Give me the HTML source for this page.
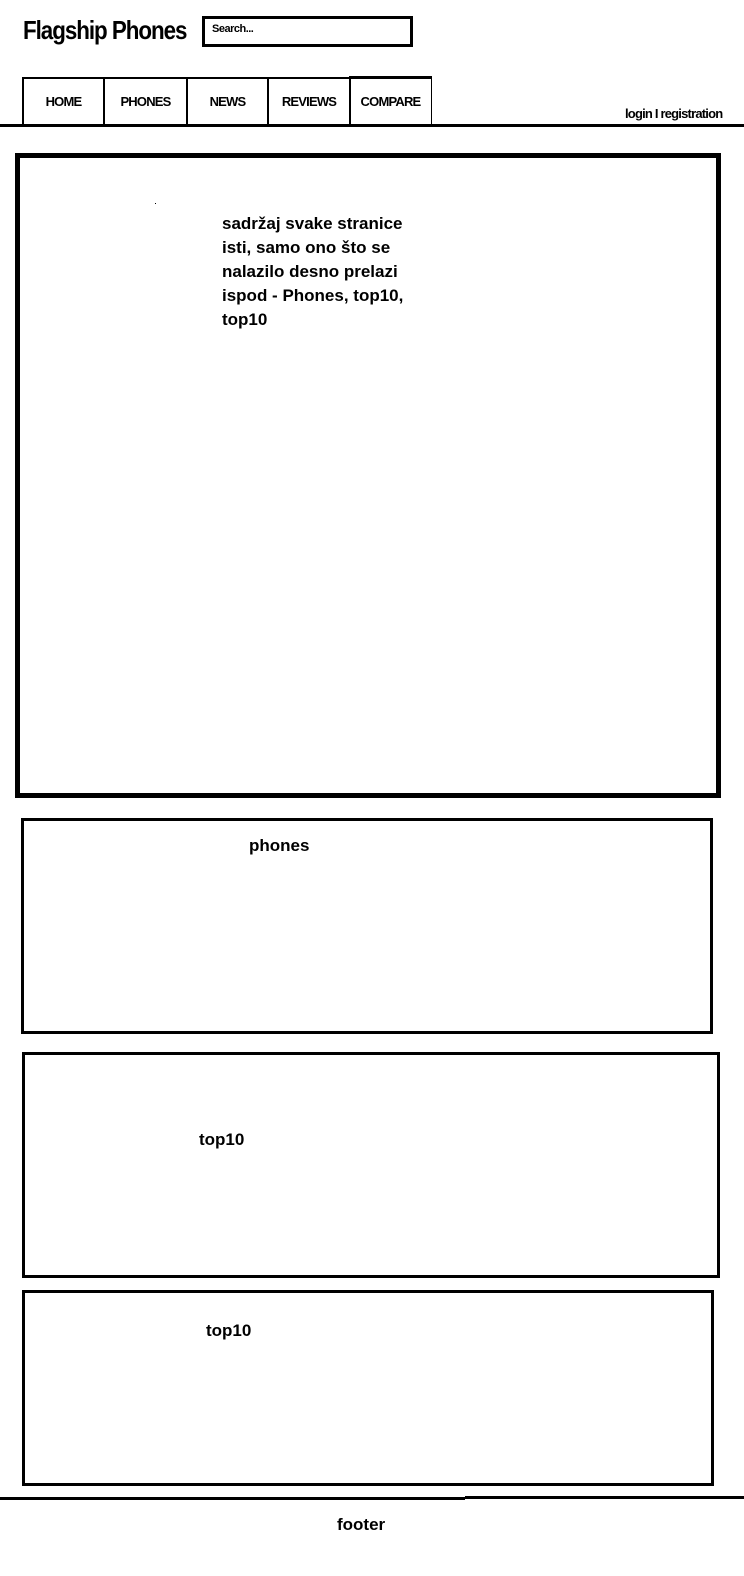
<!DOCTYPE html>
<html><head><meta charset="utf-8"><style>
body{margin:0;width:744px;height:1576px;background:#fff;position:relative;overflow:hidden;font-family:"Liberation Sans",sans-serif;color:#000}
.a{position:absolute;box-sizing:border-box}
.t{position:absolute;font-weight:bold;white-space:nowrap}
.nav{position:absolute;top:77px;height:49px;border:2px solid #000;box-sizing:border-box;font-size:13px;font-weight:bold;display:flex;align-items:center;justify-content:center;letter-spacing:-0.8px}
</style></head><body>
<div class="t" style="left:23px;top:15px;font-size:26px;letter-spacing:-1.2px;transform:scaleX(0.86);transform-origin:left">Flagship Phones</div>
<div class="a" style="left:202px;top:16px;width:211px;height:31px;border:3px solid #000"></div>
<div class="t" style="left:212px;top:23px;font-size:11px;letter-spacing:-0.5px">Search...</div>
<div class="nav" style="left:22px;width:83px">HOME</div>
<div class="nav" style="left:103px;width:85px">PHONES</div>
<div class="nav" style="left:186px;width:83px">NEWS</div>
<div class="nav" style="left:267px;width:84px">REVIEWS</div>
<div class="nav" style="left:349px;width:83px;top:76px;border-width:3px 1px 1px 1px">COMPARE</div>
<div class="t" style="left:625px;top:106px;font-size:13px;letter-spacing:-0.8px">login I registration</div>
<div class="a" style="left:0;top:124px;width:744px;height:3px;background:#000"></div>
<div class="a" style="left:15px;top:153px;width:706px;height:645px;border:5px solid #000"></div>
<div class="a" style="left:155px;top:203px;width:1px;height:1px;background:#000"></div>
<div class="t" style="left:222px;top:212px;font-size:17px;line-height:24px;white-space:normal;width:200px">sadržaj svake stranice isti, samo ono što se nalazilo desno prelazi ispod - Phones, top10, top10</div>
<div class="a" style="left:21px;top:818px;width:692px;height:216px;border:3px solid #000"></div>
<div class="t" style="left:249px;top:836px;font-size:17px">phones</div>
<div class="a" style="left:22px;top:1052px;width:698px;height:226px;border:3px solid #000"></div>
<div class="t" style="left:199px;top:1130px;font-size:17px">top10</div>
<div class="a" style="left:22px;top:1290px;width:692px;height:196px;border:3px solid #000"></div>
<div class="t" style="left:206px;top:1321px;font-size:17px">top10</div>
<div class="a" style="left:0;top:1497px;width:465px;height:3px;background:#000"></div>
<div class="a" style="left:465px;top:1496px;width:279px;height:3px;background:#000"></div>
<div class="t" style="left:337px;top:1515px;font-size:17px">footer</div>
</body></html>
